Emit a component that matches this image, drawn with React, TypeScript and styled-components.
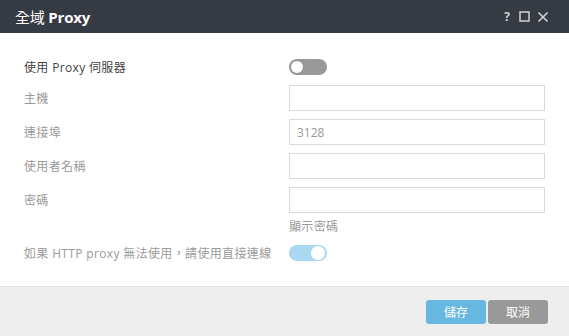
import styled, { createGlobalStyle } from 'styled-components'

const GlobalStyle = createGlobalStyle`
  html, body {
    margin: 0;
    padding: 0;
    background: #ffffff;
  }
  body {
    font-family: "Open Sans", "Noto Sans CJK TC", sans-serif;
  }
`;

const Dialog = styled.div`
  width: 569px;
  height: 336px;
  display: flex;
  flex-direction: column;
  background: #ffffff;
`;

const Header = styled.div`
  height: 33px;
  flex: none;
  background: #363a42;
  color: #ffffff;
  display: flex;
  align-items: center;
  padding: 0 20px 0 15px;
`;

const Title = styled.div`
  flex: 1;
  font-size: 15px;
  font-weight: 700;
  letter-spacing: -0.2px;
`;

const TitleCjk = styled.span`
  font-weight: 400;
`;

const HeaderIcons = styled.div`
  display: flex;
  align-items: center;
  gap: 7px;
  color: #d0d2d5;
`;

const HelpIcon = styled.span`
  font-size: 12px;
  font-weight: 700;
  line-height: 1;
  width: 10px;
  text-align: center;
`;

const Body = styled.div`
  flex: 1;
  padding: 19px 24px 0 24px;
  display: flex;
  flex-direction: column;
`;

const Row = styled.div<{ $h?: number }>`
  display: flex;
  align-items: center;
  height: ${p => p.$h ?? 34}px;
  flex: none;
`;

const Label = styled.div<{ $dark?: boolean }>`
  width: 265px;
  flex: none;
  font-size: 12px;
  letter-spacing: 0.35px;
  color: ${p => (p.$dark ? '#444444' : '#9a9a9a')};
`;

const Input = styled.input`
  box-sizing: border-box;
  width: 257px;
  height: 26px;
  border: 1px solid #d9d9d9;
  border-radius: 0;
  padding: 0 7px;
  font-family: "Open Sans", sans-serif;
  font-size: 12px;
  color: #999999;
  outline: none;
  &::placeholder {
    color: #999999;
  }
`;

const Toggle = styled.div<{ $on?: boolean }>`
  position: relative;
  width: 38px;
  height: 16px;
  border-radius: 8px;
  background: ${p => (p.$on ? '#aad8f0' : '#999999')};
`;

const Knob = styled.div<{ $on?: boolean }>`
  position: absolute;
  top: 1px;
  ${p => (p.$on ? 'right: 2px;' : 'left: 1px;')}
  width: 14px;
  height: 14px;
  box-sizing: border-box;
  border-radius: 50%;
  background: #ffffff;
  border: ${p => (p.$on ? 'none' : '1px solid #8a8a8a')};
`;

const ShowPassword = styled.div`
  margin-left: 265px;
  font-size: 12px;
  letter-spacing: 0.35px;
  color: #9a9a9a;
`;

const Footer = styled.div`
  height: 50px;
  flex: none;
  background: #eeeeee;
  border-top: 1px solid #e2e2e2;
  display: flex;
  justify-content: flex-end;
  align-items: flex-start;
  padding: 13px 21px 0 0;
  gap: 2px;
  box-sizing: border-box;
`;

const Button = styled.button<{ $primary?: boolean }>`
  width: 60px;
  height: 24px;
  border: none;
  border-radius: 3px;
  background: ${p => (p.$primary ? '#66b8e1' : '#999999')};
  color: #ffffff;
  font-family: "Open Sans", "Noto Sans CJK TC", sans-serif;
  font-size: 12px;
  padding: 0;
`;

export default function App() {
  return (
    <>
      <GlobalStyle />
      <Dialog>
        <Header>
          <Title>
            <TitleCjk>全域</TitleCjk> Proxy
          </Title>
          <HeaderIcons>
            <HelpIcon>?</HelpIcon>
            <svg width="11" height="11" viewBox="0 0 11 11">
              <rect x="1" y="1" width="9" height="9" fill="none" stroke="#d0d2d5" strokeWidth="1.5" />
            </svg>
            <svg width="12" height="12" viewBox="0 0 12 12">
              <path d="M1.5 1.5 L10.5 10.5 M10.5 1.5 L1.5 10.5" stroke="#d0d2d5" strokeWidth="1.6" />
            </svg>
          </HeaderIcons>
        </Header>

        <Body>
          <Row $h={29}>
            <Label $dark>使用 Proxy 伺服器</Label>
            <Toggle>
              <Knob />
            </Toggle>
          </Row>
          <Row>
            <Label>主機</Label>
            <Input />
          </Row>
          <Row>
            <Label>連接埠</Label>
            <Input placeholder="3128" />
          </Row>
          <Row>
            <Label>使用者名稱</Label>
            <Input />
          </Row>
          <Row>
            <Label>密碼</Label>
            <Input type="password" />
          </Row>
          <Row $h={18}>
            <ShowPassword>顯示密碼</ShowPassword>
          </Row>
          <Row $h={36}>
            <Label>如果 HTTP proxy 無法使用，請使用直接連線</Label>
            <Toggle $on>
              <Knob $on />
            </Toggle>
          </Row>
        </Body>

        <Footer>
          <Button $primary>儲存</Button>
          <Button>取消</Button>
        </Footer>
      </Dialog>
    </>
  );
}
